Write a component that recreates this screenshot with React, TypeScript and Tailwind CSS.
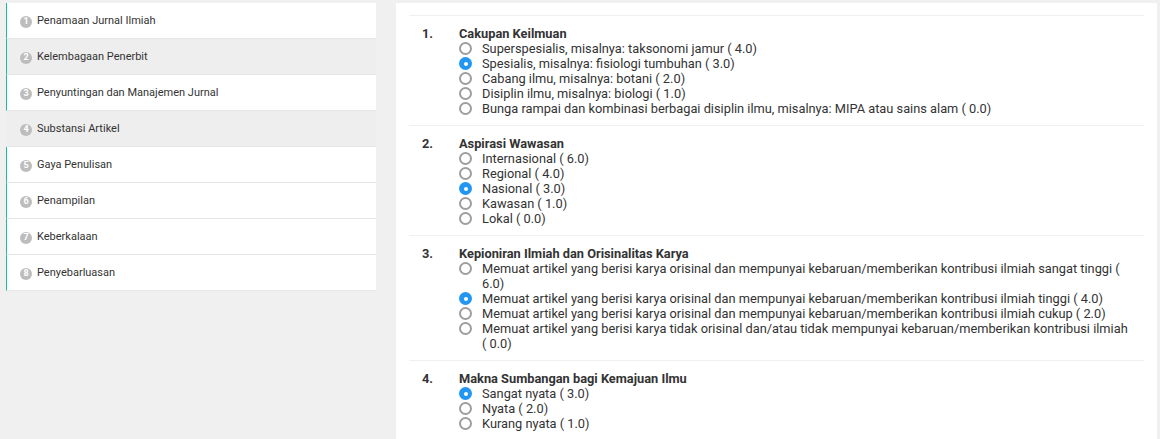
import React from 'react';

const MENU = [
  { label: 'Penamaan Jurnal Ilmiah', gray: false, active: false },
  { label: 'Kelembagaan Penerbit', gray: true, active: false },
  { label: 'Penyuntingan dan Manajemen Jurnal', gray: false, active: false },
  { label: 'Substansi Artikel', gray: true, active: true },
  { label: 'Gaya Penulisan', gray: false, active: false },
  { label: 'Penampilan', gray: false, active: false },
  { label: 'Keberkalaan', gray: false, active: false },
  { label: 'Penyebarluasan', gray: false, active: false },
];

type Question = { title: string; options: string[]; checked: number };

const QUESTIONS: Question[] = [
  {
    title: 'Cakupan Keilmuan',
    checked: 1,
    options: [
      'Superspesialis, misalnya: taksonomi jamur ( 4.0)',
      'Spesialis, misalnya: fisiologi tumbuhan ( 3.0)',
      'Cabang ilmu, misalnya: botani ( 2.0)',
      'Disiplin ilmu, misalnya: biologi ( 1.0)',
      'Bunga rampai dan kombinasi berbagai disiplin ilmu, misalnya: MIPA atau sains alam ( 0.0)',
    ],
  },
  {
    title: 'Aspirasi Wawasan',
    checked: 2,
    options: ['Internasional ( 6.0)', 'Regional ( 4.0)', 'Nasional ( 3.0)', 'Kawasan ( 1.0)', 'Lokal ( 0.0)'],
  },
  {
    title: 'Kepioniran Ilmiah dan Orisinalitas Karya',
    checked: 1,
    options: [
      'Memuat artikel yang berisi karya orisinal dan mempunyai kebaruan/memberikan kontribusi ilmiah sangat tinggi ( 6.0)',
      'Memuat artikel yang berisi karya orisinal dan mempunyai kebaruan/memberikan kontribusi ilmiah tinggi ( 4.0)',
      'Memuat artikel yang berisi karya orisinal dan mempunyai kebaruan/memberikan kontribusi ilmiah cukup ( 2.0)',
      'Memuat artikel yang berisi karya tidak orisinal dan/atau tidak mempunyai kebaruan/memberikan kontribusi ilmiah ( 0.0)',
    ],
  },
  {
    title: 'Makna Sumbangan bagi Kemajuan Ilmu',
    checked: 0,
    options: ['Sangat nyata ( 3.0)', 'Nyata ( 2.0)', 'Kurang nyata ( 1.0)'],
  },
];

function Radio({ on }: { on: boolean }) {
  return on ? (
    <span className="mt-px flex h-[13px] w-[13px] shrink-0 items-center justify-center rounded-full bg-[#2196f3]">
      <span className="h-[4px] w-[4px] rounded-full bg-white" />
    </span>
  ) : (
    <span className="mt-px h-[13px] w-[13px] shrink-0 rounded-full border-2 border-[#9e9e9e] bg-white" />
  );
}

export default function App() {
  return (
    <div
      className="flex min-h-[439px] items-start gap-5 bg-[#f0f0f0] pl-[6px] pt-[3px] pr-[3px]"
      style={{ fontFamily: 'Roboto, "Liberation Sans", sans-serif' }}
    >
      {/* sidebar */}
      <div className="w-[370px] shrink-0">
        {MENU.map((m, i) => (
          <div
            key={m.label}
            className={`flex h-[36px] items-center border-b border-[#e6e6e6] pl-[13px] pt-[2px] ${
              m.gray ? 'bg-[#eeeeee]' : 'bg-white'
            } ${m.active ? 'border-l border-l-transparent' : 'border-l border-l-[#1abc9c]'}`}
          >
            <span className="flex h-[12px] w-[12px] items-center justify-center rounded-full bg-[#bdbdbd] text-[9px] font-bold leading-none text-white">
              {i + 1}
            </span>
            <span className="ml-[5px] text-[11px] text-[#333]">{m.label}</span>
          </div>
        ))}
      </div>

      {/* content */}
      <div className="min-h-[436px] flex-1 bg-white px-[13px] pt-[12px]">
        {QUESTIONS.map((q, qi) => (
          <div key={q.title} className="border-t border-[#f0f0f0] pb-[9px] pt-[10px]">
            <div className="flex pl-[13px] pr-[13px] text-[12.8px] leading-[15px] text-[#333]">
              <div className="w-[37px] shrink-0 font-bold">{qi + 1}.</div>
              <div className="flex-1">
                <div className="font-bold">{q.title}</div>
                {q.options.map((o, oi) => (
                  <label key={o} className="flex gap-[10px]">
                    <Radio on={oi === q.checked} />
                    <span>{o}</span>
                  </label>
                ))}
              </div>
            </div>
          </div>
        ))}
      </div>
    </div>
  );
}
